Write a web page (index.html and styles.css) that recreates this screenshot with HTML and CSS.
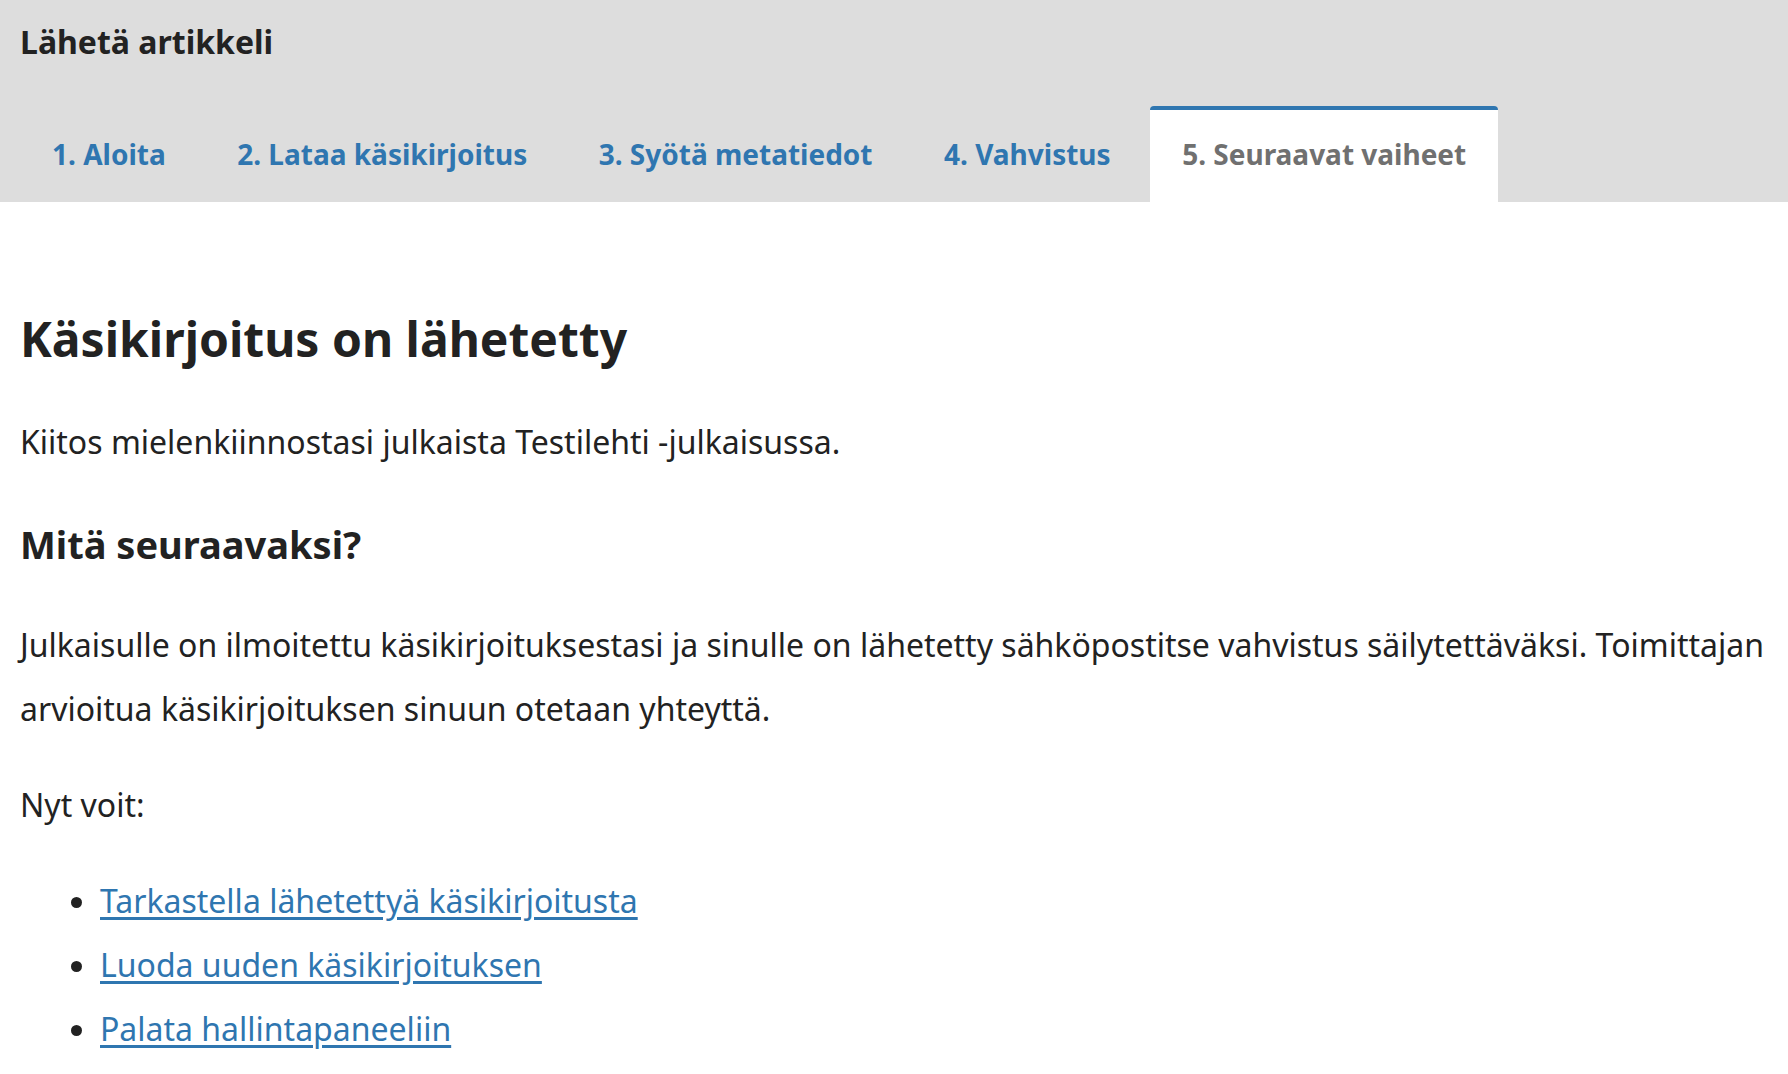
FILE: index.html
```html
<!DOCTYPE html>
<html lang="fi">
<head>
<meta charset="utf-8">
<title>Lähetä artikkeli</title>
<link rel="stylesheet" href="styles.css">
</head>
<body>
<header class="header">
  <h1 class="page-title">Lähetä artikkeli</h1>
  <nav class="tabs">
    <a class="tab" href="#">1. Aloita</a>
    <a class="tab" href="#">2. Lataa käsikirjoitus</a>
    <a class="tab" href="#">3. Syötä metatiedot</a>
    <a class="tab" href="#">4. Vahvistus</a>
    <a class="tab tab-active" href="#">5. Seuraavat vaiheet</a>
  </nav>
</header>
<main class="content">
  <h2 class="heading">Käsikirjoitus on lähetetty</h2>
  <p class="text text-first">Kiitos mielenkiinnostasi julkaista Testilehti -julkaisussa.</p>
  <h3 class="subheading">Mitä seuraavaksi?</h3>
  <p class="text text-after-sub">Julkaisulle on ilmoitettu käsikirjoituksestasi ja sinulle on lähetetty sähköpostitse vahvistus säilytettäväksi. Toimittajan arvioitua käsikirjoituksen sinuun otetaan yhteyttä.</p>
  <p class="text">Nyt voit:</p>
  <ul class="actions">
    <li><a href="#">Tarkastella lähetettyä käsikirjoitusta</a></li>
    <li><a href="#">Luoda uuden käsikirjoituksen</a></li>
    <li><a href="#">Palata hallintapaneeliin</a></li>
  </ul>
</main>
</body>
</html>
```
FILE: styles.css
```css
html, body {
  margin: 0;
  padding: 0;
  background: #fff;
}
body {
  font-family: "Noto Sans", "Open Sans", sans-serif;
  color: #222;
}
.header {
  background: #ddd;
  padding: 18px 20px 0;
}
.page-title {
  margin: 0;
  font-size: 32px;
  line-height: 48px;
  font-weight: 700;
  color: #222;
}
.tabs {
  display: flex;
  gap: 7.5px;
  margin-top: 40px;
}
.tab {
  display: block;
  padding: 0 32px 4px;
  height: 88px;
  line-height: 88px;
  border-top: 4px solid transparent;
  border-radius: 4px 4px 0 0;
  font-size: 28px;
  font-weight: 700;
  color: #2f76b0;
  text-decoration: none;
}
.tab-active {
  background: #fff;
  border-top-color: #2f76b0;
  color: #707070;
}
.content {
  padding: 0 20px;
}
.heading {
  margin: 108px 0 0;
  font-size: 48px;
  line-height: 58px;
  font-weight: 700;
}
.text {
  margin: 32px 0 0;
  font-size: 32px;
  line-height: 64px;
}
.text-first {
  margin-top: 42px;
}
.subheading {
  margin: 45px 0 0;
  font-size: 38px;
  line-height: 50px;
  font-weight: 700;
}
.text-after-sub {
  margin-top: 44px;
}
.actions {
  margin: 32px 0 0;
  padding: 0 0 0 80px;
  font-size: 32px;
  line-height: 64px;
}
.actions a {
  color: #2f76b0;
  text-decoration: underline;
  text-underline-offset: 4px;
}
```
